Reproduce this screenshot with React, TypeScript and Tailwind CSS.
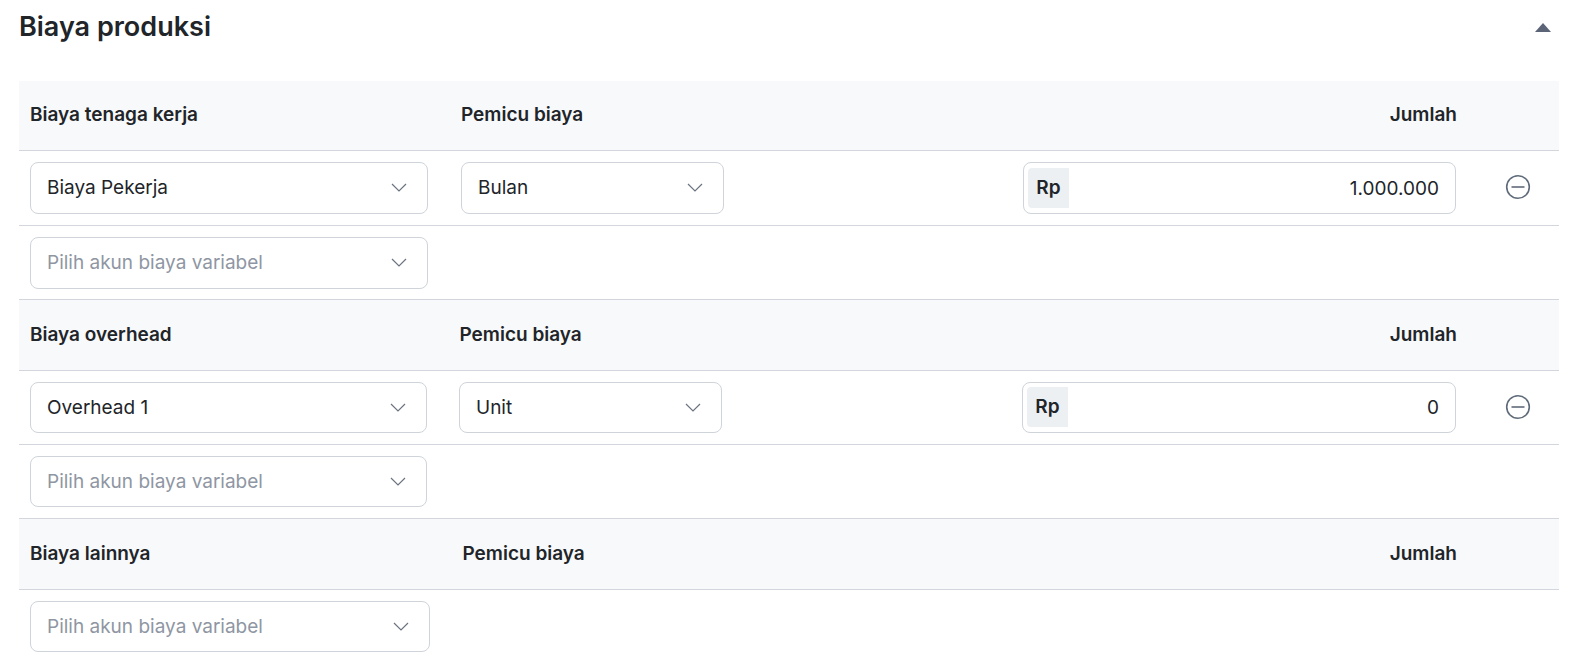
import React from 'react';

const Chevron = () => (
  <svg width="16" height="9" viewBox="0 0 16 9" fill="none" className="mb-[2px] shrink-0 text-[#6b7280]">
    <path d="M1 1l7 7 7-7" stroke="currentColor" strokeWidth="1.2" />
  </svg>
);

const MinusCircle = () => (
  <svg width="26" height="26" viewBox="0 0 26 26" fill="none" className="text-[#5f6b7a]">
    <circle cx="13" cy="13" r="11.3" stroke="currentColor" strokeWidth="1.6" />
    <path d="M6.5 13h13" stroke="currentColor" strokeWidth="1.6" />
  </svg>
);

function Select({ label, placeholder, className }: { label: string; placeholder?: boolean; className: string }) {
  return (
    <div className={`flex items-center justify-between rounded-lg border border-[#ced4da] bg-white pl-[16px] pr-[20px] ${className}`}>
      <span className={placeholder ? 'text-[#8f96a3]' : 'text-[#212529]'}>{label}</span>
      <Chevron />
    </div>
  );
}

function Amount({ value, className, badge }: { value: string; className: string; badge: string }) {
  return (
    <div className={`flex items-start justify-between rounded-lg border border-[#ced4da] bg-white pl-[4px] pr-[16px] ${className}`}>
      <span className={`flex h-[40px] w-[41px] items-center justify-center rounded-l-[4px] bg-[#edf0f3] font-semibold ${badge}`}>Rp</span>
      <span className="self-center pt-[2px]">{value}</span>
    </div>
  );
}

function HeaderRow({ title, col1, className }: { title: string; col1: string; className: string }) {
  return (
    <div className={`flex items-center border-b border-[#d3d7dd] bg-[#f8f9fa] px-[11px] font-semibold ${className}`}>
      <span className={col1}>{title}</span>
      <span>Pemicu biaya</span>
      <span className="ml-auto mr-[91px]">Jumlah</span>
    </div>
  );
}

export default function App() {
  return (
    <div className="h-[662px] overflow-hidden bg-white text-[19px] text-[#212529]" style={{ fontFamily: 'Inter, "Liberation Sans", sans-serif' }}>
      <div className="ml-[19px] mr-[21px]">
        <div className="flex h-[81px] items-start justify-between pt-[9px]">
          <h2 className="text-[27px] font-semibold leading-[36px]">Biaya produksi</h2>
          <svg width="16" height="9" viewBox="0 0 16 9" className="mr-[8px] mt-[14px] text-[#5c6578]">
            <path d="M8 0l8 9H0z" fill="currentColor" />
          </svg>
        </div>

        {/* Biaya tenaga kerja */}
        <HeaderRow title="Biaya tenaga kerja" col1="w-[431px]" className="h-[70px]" />
        <div className="flex h-[75px] items-start border-b border-[#d3d7dd] px-[11px] pt-[11px]">
          <Select label="Biaya Pekerja" className="h-[52px] w-[398px]" />
          <Select label="Bulan" className="ml-[33px] h-[52px] w-[263px]" />
          <Amount value="1.000.000" badge="mt-[5px]" className="ml-auto h-[52px] w-[433px]" />
          <div className="ml-[49px] mr-[17px] mt-[12px] flex"><MinusCircle /></div>
        </div>
        <div className="flex h-[74px] items-start border-b border-[#d3d7dd] px-[11px] pt-[11px]">
          <Select label="Pilih akun biaya variabel" placeholder className="h-[52px] w-[398px]" />
        </div>

        {/* Biaya overhead */}
        <HeaderRow title="Biaya overhead" col1="w-[429.5px]" className="h-[71px]" />
        <div className="flex h-[74px] items-start border-b border-[#d3d7dd] px-[11px] pt-[11px]">
          <Select label="Overhead 1" className="h-[51px] w-[397px] pt-[2px]" />
          <Select label="Unit" className="ml-[32px] h-[51px] w-[263px] pt-[2px]" />
          <Amount value="0" badge="mt-[4px]" className="ml-auto h-[51px] w-[434px]" />
          <div className="ml-[49px] mr-[17px] mt-[12px] flex"><MinusCircle /></div>
        </div>
        <div className="flex h-[74px] items-start border-b border-[#d3d7dd] px-[11px] pt-[11px]">
          <Select label="Pilih akun biaya variabel" placeholder className="h-[51px] w-[397px] pt-[2px]" />
        </div>

        {/* Biaya lainnya */}
        <HeaderRow title="Biaya lainnya" col1="w-[432.5px]" className="h-[71px]" />
        <div className="flex h-[72px] items-start px-[11px] pt-[11px]">
          <Select label="Pilih akun biaya variabel" placeholder className="h-[51px] w-[400px] pt-[2px]" />
        </div>
      </div>
    </div>
  );
}
